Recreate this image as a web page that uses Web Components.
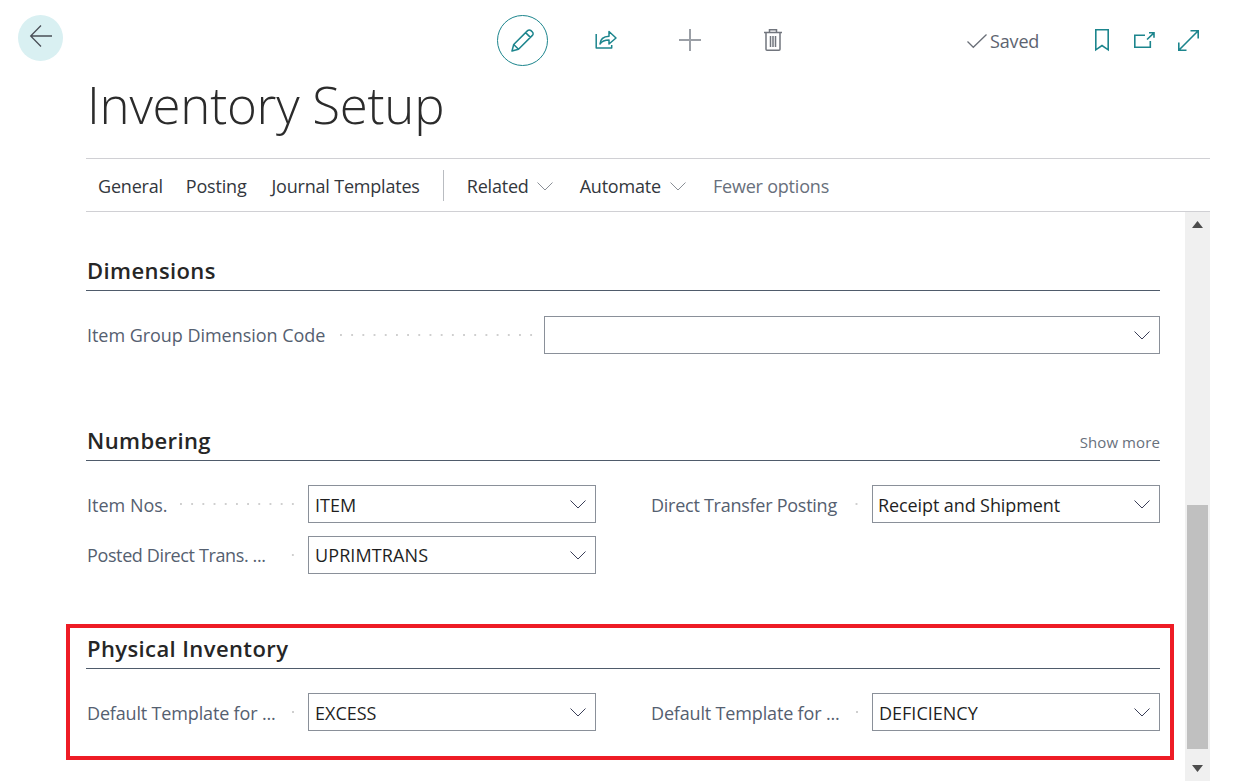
<!DOCTYPE html>
<html>
<head>
<meta charset="utf-8">
<title>Inventory Setup</title>
<style>
  html, body { margin: 0; height: 100%; background: #fff; overflow: hidden; }
  body { font-family: "Open Sans", "Noto Sans", sans-serif; }
</style>
</head>
<body>
<bc-page>
  <bc-header slot="header"></bc-header>
  <bc-title slot="title">Inventory Setup</bc-title>
  <bc-menu slot="menu"></bc-menu>

  <bc-section title="Dimensions" style="--head-top:43px;--rule-gap:25px;--bottom:71px">
    <bc-field wide label="Item Group Dimension Code" style="--dot-left:8px;--dot-right:7px;--ls:-.04px"></bc-field>
  </bc-section>

  <bc-section title="Numbering" more="Show more" style="--bottom:59px">
    <bc-grid>
      <bc-field label="Item Nos." value="ITEM" style="--pad:2px"></bc-field>
      <bc-field label="Direct Transfer Posting" value="Receipt and Shipment" style="--pad:2px;--ls:-.26px;--val-ls:-.1px;--val-left:5px"></bc-field>
      <bc-field label="Posted Direct Trans. ..." value="UPRIMTRANS" style="--ls:-.38px;--dot-left:20px;--val-ls:.1px"></bc-field>
    </bc-grid>
  </bc-section>

  <bc-section title="Physical Inventory" style="--bottom:0px;--pad:2px">
    <bc-grid>
      <bc-field label="Default Template for ..." value="EXCESS" style="--ls:-.16px"></bc-field>
      <bc-field label="Default Template for ..." value="DEFICIENCY" style="--ls:-.16px"></bc-field>
    </bc-grid>
  </bc-section>
</bc-page>

<script>
const TEAL = '#1c858d';

class BcPage extends HTMLElement {
  connectedCallback() {
    let shadowRoot = this.attachShadow({mode: 'open'});
    shadowRoot.innerHTML = `
      <style>
        :host { display: flex; flex-direction: column; width: 1238px; height: 781px; position: relative; overflow: hidden; }
        .inner { margin: 0 28px 0 86px; display: flex; flex-direction: column; flex: 1; min-height: 0; }
        .body { display: flex; flex: 1; min-height: 0; }
        .content { flex: 1; min-width: 0; padding-right: 25px; overflow: hidden; }
        /* red annotation frame drawn over the page */
        .mark { position: absolute; left: 66px; top: 624px; width: 1108px; height: 136px; box-sizing: border-box; border: 4px solid #ee1c25; pointer-events: none; }
      </style>
      <slot name="header"></slot>
      <div class="inner">
        <slot name="title"></slot>
        <slot name="menu"></slot>
        <div class="body">
          <div class="content"><slot></slot></div>
          <bc-scrollbar></bc-scrollbar>
        </div>
      </div>
      <div class="mark"></div>
    `;
  }
}

class BcHeader extends HTMLElement {
  connectedCallback() {
    let shadowRoot = this.attachShadow({mode: 'open'});
    shadowRoot.innerHTML = `
      <style>
        :host { display: flex; align-items: flex-start; height: 78px; flex: none; }
        svg { display: block; fill: none; stroke: ${TEAL}; overflow: visible; }
        .back { width: 45px; height: 46px; margin: 15px 0 0 18px; border-radius: 50%; background: #d9f0f2; display: flex; align-items: center; justify-content: center; }
        .back svg { stroke: #4a4f57; stroke-width: 1.3; margin-bottom: 4px; }
        .actions { display: flex; align-items: center; margin: 15px 0 0 434px; height: 51px; }
        .edit { width: 49px; height: 49px; border: 1px solid ${TEAL}; border-radius: 50%; display: flex; align-items: center; justify-content: center; }
        .share { margin: 0 0 3px 47px; }
        .plus { margin: 0 0 1px 62px; stroke: #9b9fa6; stroke-width: 2; }
        .trash { margin: 0 0 1px 63px; stroke: #71757d; stroke-width: 1.5; }
        .saved { display: flex; align-items: center; margin: 15px 0 0 185px; height: 51px; color: #5d6470; font-size: 18px; letter-spacing: -.15px; }
        .saved svg { stroke: #6a6f78; stroke-width: 1.3; margin-right: 3px; }
        .right { display: flex; align-items: center; height: 51px; margin: 15px 0 0 0; }
        .right svg { stroke-width: 1.6; margin-bottom: 1px; }
      </style>
      <div class="back">
        <svg width="22" height="22" viewBox="0 0 22 22"><path d="M22 11H.7M11 .5L.7 11 11 21.5"/></svg>
      </div>
      <div class="actions">
        <div class="edit">
          <svg width="23" height="23" viewBox="0 0 23 23" stroke-width="1.5" stroke-linejoin="round"><path d="M1 22l1.7-6.5L16.6 1.6a2.4 2.4 0 0 1 3.4 0l1.4 1.4a2.4 2.4 0 0 1 0 3.4L7.5 20.3zM2.7 15.5l4.8 4.8M14.6 3.6l4.8 4.8"/></svg>
        </div>
        <svg class="share" width="22" height="19" viewBox="0 0 22 19" stroke-width="1.5" stroke-linejoin="round"><path d="M1.2 4v14h15.5v-3"/><path d="M5 14c.3-4.500 3.500-7.500 9-7.700V1.500L21 8l-7 6V10c-3.800 0-7 1-9 4z"/></svg>
        <svg class="plus" width="22" height="22" viewBox="0 0 22 22"><path d="M11 0v22M0 11h22"/></svg>
        <svg class="trash" width="18" height="22" viewBox="0 0 18 22"><path d="M0 3.500h18M5.500 3.500V.8h7v2.700M2 3.500v16.700c0 .6.500 1 1 1h12c.5 0 1-.4 1-1V3.500M6.500 7v11M9 7v11M11.500 7v11"/></svg>
      </div>
      <div class="saved">
        <svg width="20" height="14" viewBox="0 0 20 14"><path d="M.5 7.500L6.300 13.300 19.500 .5"/></svg>
        <span>Saved</span>
      </div>
      <div class="right">
        <svg style="margin-left:56px" width="14" height="22" viewBox="0 0 14 22"><path d="M.8 .8h12.400v20L7 16.500 .8 20.800z"/></svg>
        <svg style="margin-left:25px" width="21" height="16" viewBox="0 0 21 16"><path d="M11 3.200H.8v12h15.500V9M13 7.500L20 .8M15 .8h5v5"/></svg>
        <svg style="margin-left:23px" width="21" height="21" viewBox="0 0 21 21"><path d="M.8 20.200L20.200 .8M12.500 .8h7.700v7.700M.8 12.500v7.700h7.700"/></svg>
      </div>
    `;
  }
}

class BcTitle extends HTMLElement {
  connectedCallback() {
    let shadowRoot = this.attachShadow({mode: 'open'});
    shadowRoot.innerHTML = `
      <style>
        :host { display: block; flex: none; height: 80px; padding-left: 1px; font-size: 51px; line-height: 52px; font-weight: 300; color: #2b2b2b; letter-spacing: -.27px; white-space: nowrap; }
      </style>
      <slot></slot>
    `;
  }
}

class BcMenu extends HTMLElement {
  connectedCallback() {
    let shadowRoot = this.attachShadow({mode: 'open'});
    const chev = `<svg width="16" height="9" viewBox="0 0 16 9" fill="none" stroke="#8a8f96" stroke-width="1"><path d="M.5 .5L8 8 15.500 .5"/></svg>`;
    shadowRoot.innerHTML = `
      <style>
        :host { display: flex; align-items: center; flex: none; height: 50px; border-top: 1px solid #d0d0d4; border-bottom: 1px solid #d0d0d4; padding: 2px 0 0 12px; font-size: 18px; letter-spacing: -.2px; color: #33373d; white-space: nowrap; }
        span { display: flex; align-items: center; gap: 9px; margin-right: 24px; }
        span.more { margin-right: 27px; }
        span.first { margin-right: 23px; }
        span.second { margin-right: 25px; }
        span.tight { gap: 8px; }
        i { width: 1px; height: 31px; background: #b9bcc1; margin: -2px 23px 0 -1px; }
        .dim { color: #68707c; }
      </style>
      <span class="first">General</span><span class="second">Posting</span><span>Journal Templates</span><i></i>
      <span class="more tight">Related ${chev}</span><span class="more">Automate ${chev}</span><span class="dim">Fewer options</span>
    `;
  }
}

class BcScrollbar extends HTMLElement {
  connectedCallback() {
    let shadowRoot = this.attachShadow({mode: 'open'});
    shadowRoot.innerHTML = `
      <style>
        :host { display: flex; flex-direction: column; flex: none; width: 25px; background: #f0f0f0; }
        .btn { height: 25px; display: flex; align-items: center; justify-content: center; flex: none; }
        .track { flex: 1; position: relative; }
        .thumb { position: absolute; left: 2px; right: 2px; top: 268px; height: 244px; background: #c0c0c0; }
        svg { display: block; fill: #4d4d4d; }
      </style>
      <div class="btn"><svg width="11" height="7" viewBox="0 0 11 7"><path d="M5.500 0L11 7H0z"/></svg></div>
      <div class="track"><div class="thumb"></div></div>
      <div class="btn"><svg width="11" height="7" viewBox="0 0 11 7"><path d="M0 0h11L5.500 7z"/></svg></div>
    `;
  }
}

class BcSection extends HTMLElement {
  connectedCallback() {
    let shadowRoot = this.attachShadow({mode: 'open'});
    const more = this.getAttribute('more');
    shadowRoot.innerHTML = `
      <style>
        :host { display: block; padding-top: var(--head-top, 0); padding-bottom: var(--bottom, 0); }
        .head { display: flex; align-items: baseline; justify-content: space-between; height: 36px; border-bottom: 1px solid #4f5b6b; box-sizing: border-box; margin-bottom: var(--rule-gap, 24px); }
        h2 { margin: 0; font-size: 22px; line-height: 30px; font-weight: 600; color: #262626; letter-spacing: .4px; padding-left: 1px; }
        a { font-size: 15px; color: #68707c; letter-spacing: .1px; transform: translateY(-1px); }
      </style>
      <div class="head"><h2>${this.getAttribute('title')}</h2>${more ? `<a>${more}</a>` : ''}</div>
      <slot></slot>
    `;
  }
}

class BcGrid extends HTMLElement {
  connectedCallback() {
    let shadowRoot = this.attachShadow({mode: 'open'});
    shadowRoot.innerHTML = `
      <style>
        :host { display: grid; grid-template-columns: 510px 510px; column-gap: 54px; row-gap: 13px; }
      </style>
      <slot></slot>
    `;
  }
}

class BcField extends HTMLElement {
  connectedCallback() {
    let shadowRoot = this.attachShadow({mode: 'open'});
    shadowRoot.innerHTML = `
      <style>
        :host { display: flex; align-items: center; height: 38px; }
        label { padding: var(--pad, 0) 0 0 1px; font-size: 18px; letter-spacing: var(--ls, 0); color: #556070; white-space: nowrap; }
        .dots { flex: 1; height: 4px; margin: 0 var(--dot-right, 10px) 0 var(--dot-left, 12px); background: radial-gradient(circle, #cfcfcf 1px, transparent 1.300px) right center / 11.200px 4px repeat-x; }
        .box { flex: none; width: 288px; height: 38px; box-sizing: border-box; border: 1px solid #8a9099; display: flex; align-items: center; justify-content: space-between; padding: 0 9px 0 var(--val-left, 6px); font-size: 18px; letter-spacing: var(--val-ls, 0); color: #1f1f1f; }
        .box span { padding-top: var(--pad, 0); }
        :host([wide]) .box { width: 616px; }
        svg { display: block; flex: none; fill: none; stroke: #3b3f58; stroke-width: 1; }
      </style>
      <label>${this.getAttribute('label')}</label>
      <div class="dots"></div>
      <div class="box">
        <span>${this.getAttribute('value') || ''}</span>
        <svg width="16" height="9" viewBox="0 0 16 9"><path d="M.5 .5L8 8 15.500 .5"/></svg>
      </div>
    `;
  }
}

window.customElements.define('bc-page', BcPage);
window.customElements.define('bc-header', BcHeader);
window.customElements.define('bc-title', BcTitle);
window.customElements.define('bc-menu', BcMenu);
window.customElements.define('bc-scrollbar', BcScrollbar);
window.customElements.define('bc-section', BcSection);
window.customElements.define('bc-grid', BcGrid);
window.customElements.define('bc-field', BcField);
</script>
</body>
</html>
